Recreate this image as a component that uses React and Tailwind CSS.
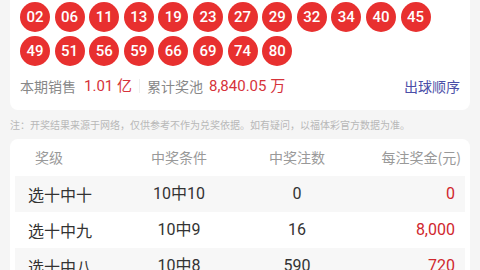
import React from 'react';

const row1 = ['02', '06', '11', '13', '19', '23', '27', '29', '32', '34', '40', '45'];
const row2 = ['49', '51', '56', '59', '66', '69', '74', '80'];

const prizes = [
  { level: '选十中十', rule: '10中10', count: '0', amount: '0' },
  { level: '选十中九', rule: '10中9', count: '16', amount: '8,000' },
  { level: '选十中八', rule: '10中8', count: '590', amount: '720' },
];

const Ball = ({ n }) => (
  <div className="w-[30px] h-[30px] rounded-full bg-[#e8302f] text-white flex items-center justify-center text-[15px] font-medium font-['Roboto',sans-serif]">
    {n}
  </div>
);

const App = () => {
  return (
    <div className="w-[480px] h-[270px] overflow-hidden bg-[#f5f5f5] font-['Noto_Sans_CJK_SC',sans-serif]">
      {/* Draw result card */}
      <div className="mx-[10px] -mt-[8px] bg-white rounded-[8px] pt-[10px] pl-[10px] pr-[10px] pb-[9px]">
        <div className="flex gap-[4.6px]">
          {row1.map(n => <Ball key={n} n={n} />)}
        </div>
        <div className="flex gap-[4.6px] mt-[4px]">
          {row2.map(n => <Ball key={n} n={n} />)}
        </div>
        <div className="flex items-center mt-[5px] h-[30px] text-[14px]">
          <span className="text-[#888]">本期销售</span>
          <span className="ml-[8px] text-[#d6333a] text-[15px] font-['Roboto','Noto_Sans_CJK_SC',sans-serif]">1.01 亿</span>
          <span className="mx-[7px] w-px h-[14px] bg-[#eee]"></span>
          <span className="text-[#888]">累计奖池</span>
          <span className="ml-[6px] text-[#d6333a] text-[15px] font-['Roboto','Noto_Sans_CJK_SC',sans-serif]">8,840.05 万</span>
          <span className="ml-auto text-[#4b4fa8]">出球顺序</span>
        </div>
      </div>

      <p className="px-[10px] mt-[8px] text-[10px] leading-[14px] text-[#b8b8b8] whitespace-nowrap">
        注：开奖结果来源于网络，仅供参考不作为兑奖依据。如有疑问，以福体彩官方数据为准。
      </p>

      {/* Prize table */}
      <div className="mx-[10px] mt-[7px] bg-white rounded-[8px] px-[5px]">
        <div className="flex items-center h-[37px] text-[14px] text-[#999]">
          <div className="w-[90px] pl-[20px]">奖级</div>
          <div className="w-[148px] text-center">中奖条件</div>
          <div className="w-[88px] text-center">中奖注数</div>
          <div className="flex-1 text-right pr-[4px]">每注奖金(元)</div>
        </div>
        {prizes.map((p, i) => (
          <div
            key={p.level}
            className={`flex items-center h-[36px] text-[16px] text-[#333] ${i % 2 === 0 ? 'bg-[#f7f7f7]' : 'bg-white'}`}
          >
            <div className="w-[90px] text-center">{p.level}</div>
            <div className="w-[148px] text-center font-['Roboto','Noto_Sans_CJK_SC',sans-serif]">{p.rule}</div>
            <div className="w-[88px] text-center font-['Roboto',sans-serif]">{p.count}</div>
            <div className="flex-1 text-right pr-[10px] text-[#d0272d] font-['Roboto',sans-serif]">{p.amount}</div>
          </div>
        ))}
      </div>
    </div>
  );
};

export default App;
